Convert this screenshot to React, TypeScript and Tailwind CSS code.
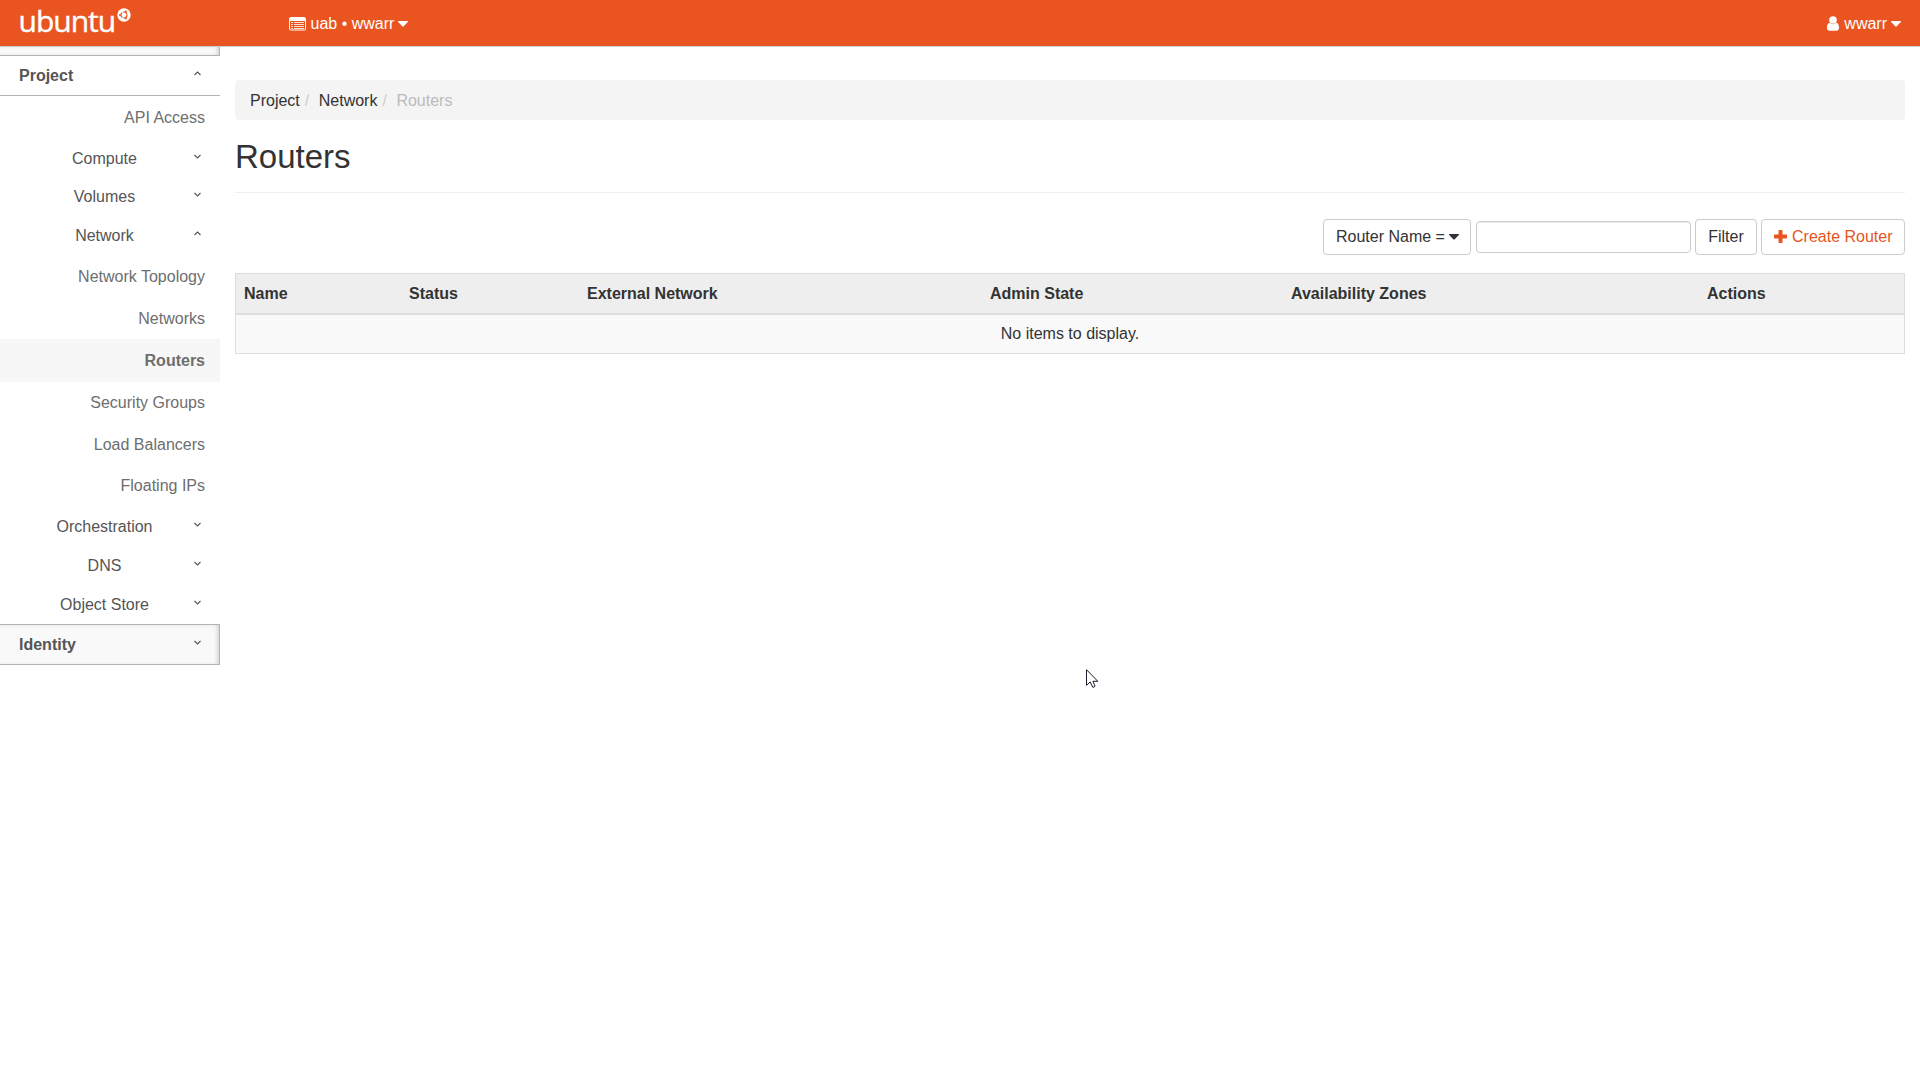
type NavItem = {
  label: string;
  kind: "panel" | "group";
  open?: boolean;
  active?: boolean;
  box: string;
};

const NAV_ITEMS: NavItem[] = [
  { label: "API Access", kind: "panel", box: "h-[42px] pt-px" },
  { label: "Compute", kind: "group", box: "h-[39px] pt-0.5" },
  { label: "Volumes", kind: "group", box: "h-[39px]" },
  { label: "Network", kind: "group", open: true, box: "h-[39px]" },
  { label: "Network Topology", kind: "panel", box: "h-[42px] pt-px" },
  { label: "Networks", kind: "panel", box: "h-[42px] pt-px" },
  { label: "Routers", kind: "panel", active: true, box: "h-[43px]" },
  { label: "Security Groups", kind: "panel", box: "h-[41px]" },
  { label: "Load Balancers", kind: "panel", box: "h-[42px] pt-px" },
  { label: "Floating IPs", kind: "panel", box: "h-[42px]" },
  { label: "Orchestration", kind: "group", box: "h-[39px]" },
  { label: "DNS", kind: "group", box: "h-[39px]" },
  { label: "Object Store", kind: "group", box: "h-[39px]" },
];

const COLUMNS = [
  { label: "Name", width: "w-[165px]" },
  { label: "Status", width: "w-[178px]" },
  { label: "External Network", width: "w-[403px]" },
  { label: "Admin State", width: "w-[301px]" },
  { label: "Availability Zones", width: "w-[416px]" },
  { label: "Actions", width: "w-[205px]" },
];

const Chevron = ({ up = false }: { up?: boolean }) => (
  <svg width="7" height="5" viewBox="0 0 7 5" fill="none" stroke="#555" strokeWidth="1.1" className="mb-[5px] shrink-0">
    <path d={up ? "M0.5 4L3.5 1L6.5 4" : "M0.5 1L3.5 4L6.5 1"} />
  </svg>
);

const Caret = () => (
  <svg width="10" height="6" viewBox="0 0 10 6" fill="currentColor" className="ml-1 shrink-0">
    <path d="M0.4 0H9.6Q10.3 0.3 9.8 0.9L5.5 5.4Q5 5.8 4.5 5.4L0.2 0.9Q-0.3 0.3 0.4 0Z" />
  </svg>
);

const Logo = () => (
  <a href="#" className="flex items-start text-white">
    <span className="w-[98px] font-['Open_Sans',sans-serif] text-[30px] leading-[36px] tracking-[-1px] [-webkit-text-stroke:0.4px_#fff]">
      ubuntu
    </span>
    <svg width="14" height="14" viewBox="0 0 14 14" className="mt-[5px] shrink-0">
      <circle cx="7" cy="7" r="6.7" fill="#fff" />
      <circle cx="7" cy="7" r="3" fill="none" stroke="#e95420" strokeWidth="1.2" strokeDasharray="5.3 1" />
      <circle cx="3" cy="7" r="1" fill="#e95420" />
      <circle cx="9" cy="3.5" r="1" fill="#e95420" />
      <circle cx="9" cy="10.5" r="1" fill="#e95420" />
    </svg>
  </a>
);

const ListIcon = () => (
  <svg width="17" height="14" viewBox="0 0 17 14" className="shrink-0">
    <rect x="0.5" y="0.5" width="16" height="12.5" rx="1" fill="none" stroke="#fff" />
    <path d="M1 1h15v3H1z" fill="#fff" />
    <path d="M2 5.5h2M2 7.5h2M2 9.5h2M2 11.5h2M5 5.5h10M5 7.5h10M5 9.5h10M5 11.5h10" stroke="#fff" strokeOpacity="0.8" />
  </svg>
);

const UserIcon = () => (
  <svg width="12" height="15" viewBox="0 0 12 15" fill="#fff" className="shrink-0">
    <circle cx="6" cy="4" r="3.8" />
    <path d="M2.8 6.8C0.8 7 0 9 0 11.5C0 13.7 1 14.8 2.6 14.8H9.4C11 14.8 12 13.7 12 11.5C12 9 11.2 7 9.2 6.8C7.5 8.6 4.5 8.6 2.8 6.8Z" />
  </svg>
);

const PlusIcon = () => (
  <svg width="13" height="13" viewBox="0 0 13 13" fill="#e95420" className="mb-px mr-[5px] shrink-0">
    <path d="M5.3 0H7.7Q8.5 0 8.5 0.8V4.5H12.2Q13 4.5 13 5.3V7.7Q13 8.5 12.2 8.5H8.5V12.2Q8.5 13 7.7 13H5.3Q4.5 13 4.5 12.2V8.5H0.8Q0 8.5 0 7.7V5.3Q0 4.5 0.8 4.5H4.5V0.8Q4.5 0 5.3 0Z" />
  </svg>
);

const Topbar = () => (
  <header className="flex h-[47px] items-center border-b border-[#ccc] bg-[#e95420] text-white">
    <div className="w-[289px] self-start pl-[18.5px] pt-[3px]">
      <Logo />
    </div>
    <button className="flex items-center pt-px">
      <ListIcon />
      <span className="ml-[4.5px]">uab • wwarr</span>
      <Caret />
    </button>
    <button className="ml-auto mr-[19px] flex items-center pt-px">
      <UserIcon />
      <span className="ml-[5px]">wwarr</span>
      <Caret />
    </button>
  </header>
);

const Sidebar = () => (
  <nav className="w-[220px] shrink-0 text-[#555]">
    <div className="h-[9px] border-b border-r border-[#b3b3b3] bg-[#f9f9f9] shadow-[inset_-3px_0_5px_-2px_rgba(0,0,0,0.2)]" />
    <div className="flex h-10 items-center justify-between border-b border-[#b3b3b3] pl-[19px] pr-[19px] font-bold">
      Project
      <Chevron up />
    </div>
    <ul>
      {NAV_ITEMS.map((item) =>
        item.kind === "panel" ? (
          <li
            key={item.label}
            className={`flex items-center justify-end pr-[15px] text-[#6e6e6e] ${item.box} ${
              item.active ? "bg-[#f7f7f7] font-bold" : ""
            }`}
          >
            {item.label}
          </li>
        ) : (
          <li key={item.label} className={`flex items-center ${item.box}`}>
            <span className="ml-[15px] mr-px w-[178px] pl-px text-center">{item.label}</span>
            <Chevron up={item.open} />
          </li>
        )
      )}
    </ul>
    <div className="flex h-[41px] items-center justify-between border border-l-0 border-[#b3b3b3] bg-[#f9f9f9] pl-[19px] pr-[18px] font-bold shadow-[inset_-3px_0_5px_-2px_rgba(0,0,0,0.2)]">
      Identity
      <Chevron />
    </div>
  </nav>
);

const Toolbar = () => (
  <div className="mt-[26px] flex items-center justify-end">
    <button className="flex h-9 w-[148px] items-center rounded border border-[#ccc] pl-3">
      Router Name =
      <Caret />
    </button>
    <input className="ml-[5px] h-8 w-[215px] rounded border border-[#ccc] px-3 shadow-[inset_0_1px_1px_rgba(0,0,0,0.075)]" />
    <button className="ml-1 h-9 w-[62px] rounded border border-[#ccc]">Filter</button>
    <button className="ml-1 flex h-9 w-[144px] items-center rounded border border-[#ccc] pl-3 text-[#e95420]">
      <PlusIcon />
      Create Router
    </button>
  </div>
);

const RouterTable = () => (
  <table className="mt-[18px] w-[1670px] table-fixed border-separate border-spacing-0 border border-[#ddd]">
    <thead>
      <tr className="h-[41px] bg-[#eee] text-left">
        {COLUMNS.map((column) => (
          <th key={column.label} className={`border-b-2 border-[#ddd] px-2 py-0 ${column.width}`}>
            {column.label}
          </th>
        ))}
      </tr>
    </thead>
    <tbody>
      <tr className="h-[38px] bg-[#f9f9f9]">
        <td colSpan={6} className="p-0 text-center">
          No items to display.
        </td>
      </tr>
    </tbody>
  </table>
);

const Pointer = () => (
  <svg width="13" height="20" viewBox="0 0 13 20" className="absolute left-[1086px] top-[669px]">
    <path
      d="M0.5 0.7V16.3L4.2 12.9L6.7 18.2Q8.6 18.6 9 17L6.9 12.3H11.8Z"
      fill="#fff"
      stroke="#1b1b2b"
      strokeWidth="1"
    />
  </svg>
);

const App = () => {
  return (
    <div className="relative min-h-screen bg-white font-['Liberation_Sans',Arial,sans-serif] text-base leading-5 text-[#333]">
      <Topbar />
      <div className="flex">
        <Sidebar />
        <main className="w-[1700px] px-[15px] pt-[33px]">
          <ol className="flex h-10 items-center rounded bg-[#f4f4f4] pl-[15px] pt-px">
            <li>Project</li>
            <li className="ml-[5px] text-[#ccc]">/</li>
            <li className="ml-[9.5px]">Network</li>
            <li className="ml-[5px] text-[#ccc]">/</li>
            <li className="ml-[9.5px] text-[#bbb]">Routers</li>
          </ol>
          <h1 className="flex h-[73px] items-center border-b border-[#eee] pt-0.5 text-[33px]">Routers</h1>
          <Toolbar />
          <RouterTable />
        </main>
      </div>
      <Pointer />
    </div>
  );
};

export default App;
